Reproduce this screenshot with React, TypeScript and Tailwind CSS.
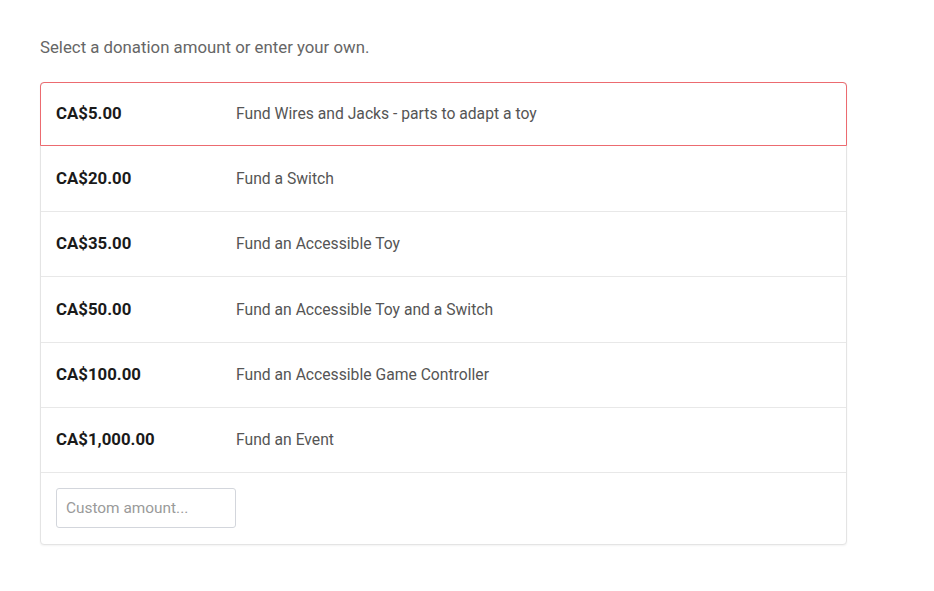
import React, { useState } from "react";

interface Tier {
    amount: string;
    label: string;
    height: string;
}

const tiers: Tier[] = [
    { amount: "CA$5.00", label: "Fund Wires and Jacks - parts to adapt a toy", height: "h-[64px]" },
    { amount: "CA$20.00", label: "Fund a Switch", height: "h-[66px]" },
    { amount: "CA$35.00", label: "Fund an Accessible Toy", height: "h-[65px]" },
    { amount: "CA$50.00", label: "Fund an Accessible Toy and a Switch", height: "h-[66px]" },
    { amount: "CA$100.00", label: "Fund an Accessible Game Controller", height: "h-[65px]" },
    { amount: "CA$1,000.00", label: "Fund an Event", height: "h-[65px]" },
];

const App: React.FC = () => {
    const [selected, setSelected] = useState(0);

    return (
        <div className="min-h-screen bg-white px-10 pt-[35px] font-['Roboto',sans-serif]">
            <p className="text-[16.8px] leading-6 text-[#666]">Select a donation amount or enter your own.</p>

            <div className="mt-[23px] w-[807px] rounded border border-[#e4e4e4] bg-white shadow-[0_1px_2px_rgba(0,0,0,0.05)]">
                {tiers.map((tier, i) => (
                    <button
                        key={tier.amount}
                        onClick={() => setSelected(i)}
                        className={
                            (i === selected
                                ? "-mx-px -mt-px w-[calc(100%+2px)] rounded-t border border-[#ec6b70] "
                                : "w-full border-b border-[#e8e8e8] ") +
                            tier.height +
                            " flex items-center px-[15px] text-left"
                        }
                    >
                        <span className="w-[180px] shrink-0 text-[16.8px] font-bold text-[#1a1a1a]">{tier.amount}</span>
                        <span className="text-[15.7px] text-[#555]">{tier.label}</span>
                    </button>
                ))}
                <div className="px-[15px] pb-4 pt-[15px]">
                    <input
                        type="text"
                        placeholder="Custom amount..."
                        className="h-10 w-[180px] rounded-[3px] border border-[#d3d6dc] px-[9px] text-[15.4px] text-[#333] placeholder:text-[#9a9a9a] focus:outline-none"
                    />
                </div>
            </div>
        </div>
    );
};

export default App;
